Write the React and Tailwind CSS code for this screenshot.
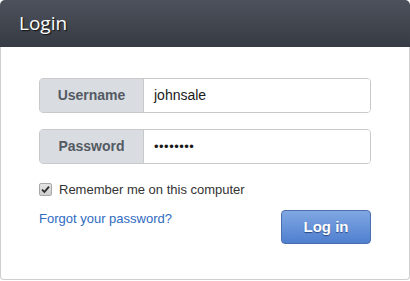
import React from "react";

export default function App() {
  return (
    <div className="w-[410px] h-[281px] bg-white" style={{ fontFamily: "'Liberation Sans', Arial, sans-serif" }}>
      <div className="w-[410px] h-[280px] flex flex-col">
        <div className="h-[47px] rounded-t-[5px] bg-gradient-to-b from-[#4c515c] to-[#363b43] flex items-center pl-[19px]">
          <span className="text-white text-[19px] leading-none [text-shadow:1px_1px_1px_#111] pb-[1px]" style={{ fontFamily: "'Open Sans', 'Liberation Sans', sans-serif" }}>Login</span>
        </div>
        <div className="flex-1 border-x border-b border-[#cfcfcf] rounded-b-[4px] pl-[38px] pr-[38px] pt-[31px]">
          <div className="flex h-[35px] rounded-[4px] border border-[#c9c9c9] overflow-hidden">
            <div className="w-[104px] bg-[#d9dce0] border-r border-[#c9c9c9] flex items-center justify-center text-[14px] font-bold text-[#545a64]">Username</div>
            <div className="flex-1 bg-white flex items-center pl-[10px] text-[14px] text-[#1a1a1a]">johnsale</div>
          </div>
          <div className="flex h-[35px] mt-[16px] rounded-[4px] border border-[#c9c9c9] overflow-hidden">
            <div className="w-[104px] bg-[#d9dce0] border-r border-[#c9c9c9] flex items-center justify-center text-[14px] font-bold text-[#545a64]">Password</div>
            <div className="flex-1 bg-white flex items-center pl-[10px] text-[13px] text-[#1a1a1a] tracking-[0.5px]">••••••••</div>
          </div>
          <div className="flex items-center mt-[19px] h-[13px]">
            <div className="w-[13px] h-[13px] rounded-[2px] border border-[#a8a8a8] bg-gradient-to-b from-[#e4e4e4] to-[#cfcfcf] flex items-center justify-center">
              <svg width="9" height="9" viewBox="0 0 9 9">
                <path d="M1 4.6 L3.4 7 L8 1.6" fill="none" stroke="#2b2b2b" strokeWidth="1.8" />
              </svg>
            </div>
            <span className="ml-[7px] text-[13px] text-[#333] leading-none">Remember me on this computer</span>
          </div>
          <div className="flex justify-between items-start mt-[14px]">
            <span className="text-[13px] text-[#2e6bbf] leading-[16px] mt-[1px]">Forgot your password?</span>
            <div className="w-[90px] h-[34px] rounded-[4px] border border-[#4a6eae] bg-gradient-to-b from-[#80a7e2] to-[#4f7fcf] flex items-center justify-center text-white font-bold text-[15px] [text-shadow:0_1px_1px_#2a4a80]">Log in</div>
          </div>
        </div>
      </div>
    </div>
  );
}
